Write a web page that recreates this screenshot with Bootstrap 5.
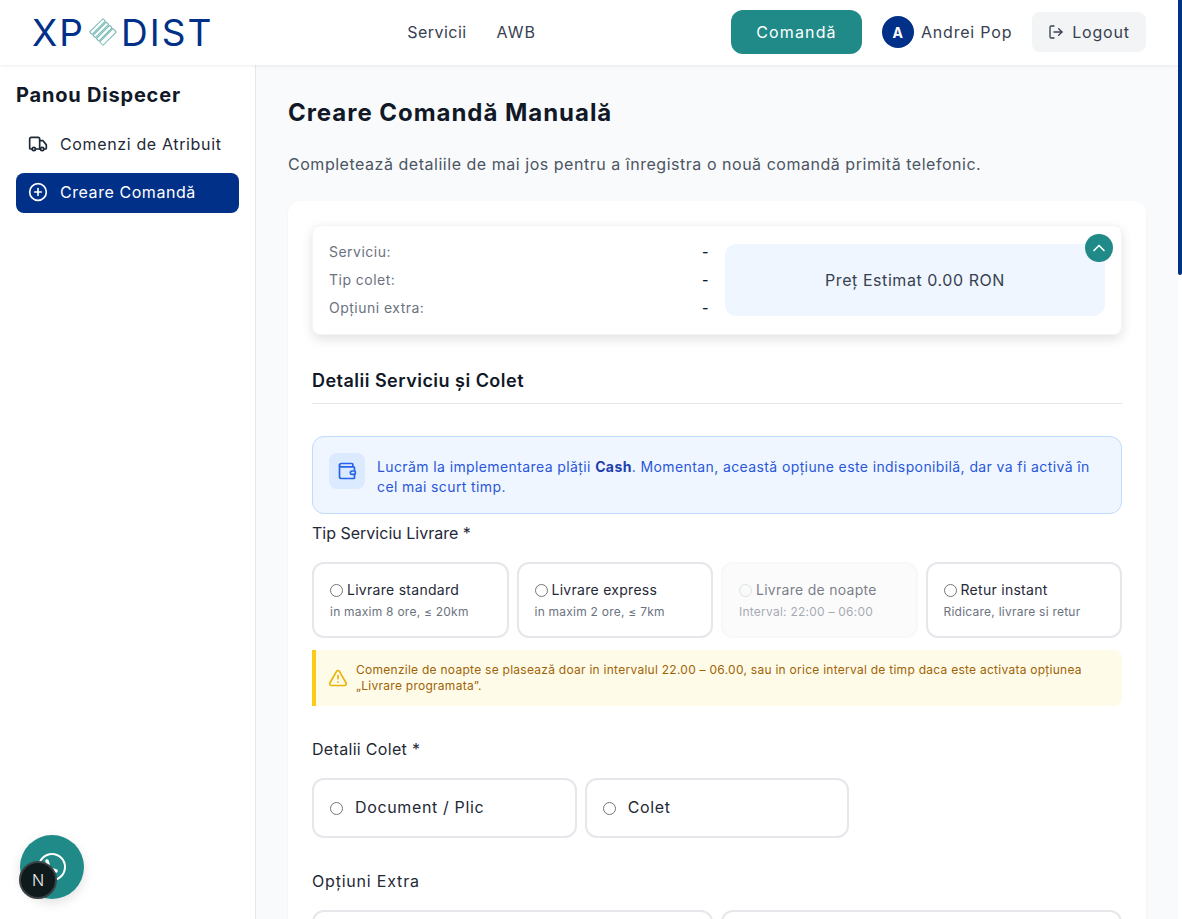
<!DOCTYPE html>
<html lang="ro">
<head>
    <meta charset="UTF-8">
    <meta name="viewport" content="width=device-width, initial-scale=1.0">
    <title>Creare Comandă Manuală</title>
    <link href="https://cdn.jsdelivr.net/npm/bootstrap@5.3.0/dist/css/bootstrap.min.css" rel="stylesheet">
    <style>
        html { background: #fff; }
        body {
            font-family: "Inter", "Liberation Sans", sans-serif;
            letter-spacing: .03em;
            color: #111827;
            background: #f9fafb;
            margin-right: 4px;
        }
        svg.ico { fill: none; stroke: currentColor; stroke-width: 2; stroke-linecap: round; stroke-linejoin: round; flex-shrink: 0; }
        .scroll-thumb { width: 4px; height: 275px; top: 0; right: 0; background: #003087; border-radius: 0 0 4px 4px; z-index: 30; }

        .top-bar { height: 65px; padding: 0 32px 1px; background: #fff; box-shadow: 0 1px 3px rgba(0,0,0,.08); position: sticky; top: 0; z-index: 10; }
        .logo { width: 180px; color: #003087; font-size: 37px; line-height: 1; font-weight: 400; letter-spacing: .055em; }
        .logo svg { width: 28px; height: 28px; margin: 0 4px 0 4px; flex-shrink: 0; }
        .top-nav { gap: 30px; }
        .top-link { color: #374151; font-size: 16px; text-decoration: none; }
        .top-link + .top-link { letter-spacing: .06em; }
        .btn-order { width: 131px; height: 44px; margin-right: 20px; background: #1f8a87; color: #fff; border: 0; border-radius: 12px; font-size: 16px; letter-spacing: .07em; }
        .avatar { width: 32px; height: 32px; background: #003087; color: #fff; font-size: 14px; font-weight: 700; }
        .user-name { width: 91px; margin: 0 20px 0 7px; color: #374151; font-size: 16px; letter-spacing: .05em; white-space: nowrap; }
        .btn-logout { width: 114px; height: 40px; background: #f3f4f6; color: #374151; border: 0; border-radius: 8px; font-size: 16px; letter-spacing: .05em; }

        .side { width: 256px; flex-shrink: 0; background: #fff; border-right: 1px solid #e5e7eb; padding: 16px; }
        .side h2 { font-size: 20px; font-weight: 700; line-height: 28px; margin-bottom: 15px; letter-spacing: .04em; }
        .side-link { height: 40px; padding: 0 12px; gap: 12px; border-radius: 8px; color: #1f2937; text-decoration: none; font-size: 16px; margin-bottom: 9px; letter-spacing: .04em; }
        .side-link.active { background: #003087; color: #fff; padding-bottom: 2px; letter-spacing: .035em; }

        .content { padding: 32px; min-width: 0; }
        .content h1 { font-size: 24px; font-weight: 700; line-height: 32px; margin-bottom: 23px; letter-spacing: .04em; }
        .lead-text { font-size: 16px; line-height: 24px; color: #4b5563; margin-bottom: 25px; letter-spacing: .033em; }
        .form-card { background: #fff; border-radius: 12px; padding: 24px; min-height: 2805px; box-shadow: 0 1px 3px rgba(0,0,0,.05); }

        .summary { height: 110px; padding: 12px 16px; border: 1px solid #f3f4f6; border-radius: 8px; box-shadow: 0 4px 12px rgba(0,0,0,.12); margin-bottom: 32px; }
        .summary-row { height: 28px; padding-bottom: 2px; font-size: 14px; color: #6b7280; }
        .summary-row b { font-weight: 500; color: #111827; }
        .price-box { height: 72px; background: #eff6ff; border-radius: 12px; font-size: 16px; color: #374151; letter-spacing: .035em; }
        .toggle { width: 28px; height: 28px; top: 8px; right: 8px; background: #1f8a87; color: #fff; border: 0; padding: 0; }

        .section-title { font-size: 18px; font-weight: 600; line-height: 28px; padding-bottom: 8px; border-bottom: 1px solid #e5e7eb; margin-bottom: 32px; }
        .info-box { padding: 16px; gap: 12px; background: #eff6ff; border: 1px solid #bfdbfe; border-radius: 12px; color: #2a56d8; font-size: 14px; line-height: 20px; letter-spacing: .028em; }
        .info-box b { color: #1e40af; }
        .info-icon { width: 36px; height: 36px; background: #dbeafe; border-radius: 8px; color: #2563eb; flex-shrink: 0; }
        .field-label { font-size: 16px; line-height: 24px; color: #1f2937; margin-bottom: 17px; }
        .label-service { margin-top: 7px; letter-spacing: 0; }
        .label-pkg { margin-top: 31px; letter-spacing: .02em; }
        .label-extra { margin-top: 31px; letter-spacing: .05em; }

        .opt { border: 2px solid #e5e7eb; border-radius: 12px; background: #fff; cursor: pointer; }
        .opt input { margin: 0; flex-shrink: 0; }
        .opt-service { height: 76px; padding: 0 16px; }
        .opt-service .name { font-size: 14px; line-height: 20px; color: #1f2937; gap: 4px; letter-spacing: .02em; }
        .opt-service small { font-size: 12px; line-height: 16px; color: #6b7280; margin-top: 4px; letter-spacing: .02em; }
        .opt.off { background: #f9fafb; border-color: #f3f4f6; opacity: .6; }
        .opt-plain { height: 60px; padding: 0 16px 2px; gap: 12px; font-size: 16px; color: #1f2937; letter-spacing: .04em; }
        .opt-plain input { margin-top: 2px; }

        .warn { height: 56px; margin-top: 12px; padding: 0 16px 0 12px; gap: 8px; background: #fefce8; border-left: 4px solid #facc15; border-radius: 0 8px 8px 0; color: #a16207; font-size: 12px; line-height: 16px; letter-spacing: .022em; }
        .warn svg { color: #eab308; }

        .chat-btn { width: 64px; height: 64px; left: 20px; bottom: 20px; background: #1f8a87; color: #fff; box-shadow: 0 4px 12px rgba(0,0,0,.12); z-index: 20; }
        .dev-badge { width: 38px; height: 38px; left: 19px; bottom: 20px; background: #0f1a1c; color: #eee; border: 2px solid #3a4245; font-size: 16px; font-weight: 300; letter-spacing: 0; z-index: 21; }
    </style>
</head>
<body>

<header class="top-bar d-flex align-items-center justify-content-between">
    <a class="logo d-flex align-items-center text-decoration-none" href="#">
        <span>XP</span>
        <svg viewBox="0 0 28 28" fill="none" stroke="#6db5b1" stroke-width="1">
            <g transform="rotate(-45 14 14)">
                <rect x="4.6" y="4.6" width="18.8" height="3.4" rx=".4"/>
                <rect x="4.6" y="9.3" width="18.8" height="3.4" rx=".4"/>
                <rect x="4.6" y="14" width="18.8" height="3.4" rx=".4"/>
                <rect x="4.6" y="18.7" width="18.8" height="4.7" rx=".4"/>
            </g>
        </svg>
        <span>DIST</span>
    </a>
    <nav class="top-nav d-flex">
        <a class="top-link" href="#">Servicii</a>
        <a class="top-link" href="#">AWB</a>
    </nav>
    <div class="d-flex align-items-center">
        <button class="btn-order">Comandă</button>
        <span class="avatar rounded-circle d-flex align-items-center justify-content-center">A</span>
        <span class="user-name">Andrei Pop</span>
        <button class="btn-logout d-flex align-items-center justify-content-center gap-2">
            <svg class="ico" width="16" height="16" viewBox="0 0 24 24"><path d="M9 21H5a2 2 0 0 1-2-2V5a2 2 0 0 1 2-2h4"/><polyline points="16 17 21 12 16 7"/><line x1="21" y1="12" x2="9" y2="12"/></svg>
            Logout
        </button>
    </div>
</header>

<div class="d-flex">
    <aside class="side">
        <h2>Panou Dispecer</h2>
        <a class="side-link d-flex align-items-center" href="#">
            <svg class="ico" width="20" height="20" viewBox="0 0 24 24"><path d="M14 18V6a2 2 0 0 0-2-2H4a2 2 0 0 0-2 2v11a1 1 0 0 0 1 1h2"/><path d="M15 18H9"/><path d="M19 18h2a1 1 0 0 0 1-1v-3.65a1 1 0 0 0-.22-.624l-3.48-4.35A1 1 0 0 0 17.52 8H14"/><circle cx="17" cy="18" r="2"/><circle cx="7" cy="18" r="2"/></svg>
            Comenzi de Atribuit
        </a>
        <a class="side-link active d-flex align-items-center" href="#">
            <svg class="ico" width="20" height="20" viewBox="0 0 24 24"><circle cx="12" cy="12" r="10"/><path d="M8 12h8"/><path d="M12 8v8"/></svg>
            Creare Comandă
        </a>
    </aside>

    <main class="content flex-grow-1">
        <h1>Creare Comandă Manuală</h1>
        <p class="lead-text">Completează detaliile de mai jos pentru a înregistra o nouă comandă primită telefonic.</p>

        <div class="form-card">
            <div class="summary position-relative row g-0 align-items-center">
                <div class="col-6 pe-2">
                    <div class="summary-row d-flex align-items-center justify-content-between"><span>Serviciu:</span><b>-</b></div>
                    <div class="summary-row d-flex align-items-center justify-content-between"><span>Tip colet:</span><b>-</b></div>
                    <div class="summary-row d-flex align-items-center justify-content-between"><span>Opțiuni extra:</span><b>-</b></div>
                </div>
                <div class="col-6 ps-2">
                    <div class="price-box d-flex align-items-center justify-content-center">Preț Estimat 0.00 RON</div>
                </div>
                <button class="toggle position-absolute rounded-circle d-flex align-items-center justify-content-center">
                    <svg class="ico" width="20" height="20" viewBox="0 0 24 24" stroke-width="2.5"><path d="m18 15-6-6-6 6"/></svg>
                </button>
            </div>

            <div class="section-title">Detalii Serviciu și Colet</div>

            <div class="info-box d-flex align-items-start">
                <span class="info-icon d-flex align-items-center justify-content-center">
                    <svg class="ico" width="20" height="20" viewBox="0 0 24 24"><path d="M19 7V4a1 1 0 0 0-1-1H5a2 2 0 0 0 0 4h15a1 1 0 0 1 1 1v4h-3a2 2 0 0 0 0 4h3a1 1 0 0 0 1-1v-2a1 1 0 0 0-1-1"/><path d="M3 5v14a2 2 0 0 0 2 2h15a1 1 0 0 0 1-1v-4"/></svg>
                </span>
                <span class="mt-1">Lucrăm la implementarea plății <b>Cash</b>. Momentan, această opțiune este indisponibilă, dar va fi activă în cel mai scurt timp.</span>
            </div>

            <div class="field-label label-service">Tip Serviciu Livrare *</div>
            <div class="row g-2">
                <div class="col-3"><label class="opt opt-service d-flex flex-column justify-content-center">
                    <span class="name d-flex align-items-center"><input type="radio" name="svc"> Livrare standard</span>
                    <small>in maxim 8 ore, ≤ 20km</small>
                </label></div>
                <div class="col-3"><label class="opt opt-service d-flex flex-column justify-content-center">
                    <span class="name d-flex align-items-center"><input type="radio" name="svc"> Livrare express</span>
                    <small>in maxim 2 ore, ≤ 7km</small>
                </label></div>
                <div class="col-3"><label class="opt opt-service off d-flex flex-column justify-content-center">
                    <span class="name d-flex align-items-center"><input type="radio" name="svc" disabled> Livrare de noapte</span>
                    <small>Interval: 22:00 – 06:00</small>
                </label></div>
                <div class="col-3"><label class="opt opt-service d-flex flex-column justify-content-center">
                    <span class="name d-flex align-items-center"><input type="radio" name="svc"> Retur instant</span>
                    <small>Ridicare, livrare si retur</small>
                </label></div>
            </div>

            <div class="warn d-flex align-items-center">
                <svg class="ico" width="20" height="20" viewBox="0 0 24 24"><path d="m21.73 18-8-14a2 2 0 0 0-3.48 0l-8 14A2 2 0 0 0 4 21h16a2 2 0 0 0 1.73-3"/><path d="M12 9v4"/><path d="M12 17h.01"/></svg>
                <span>Comenzile de noapte se plasează doar in intervalul 22.00 – 06.00, sau in orice interval de timp daca este activata opțiunea „Livrare programata”.</span>
            </div>

            <div class="field-label label-pkg">Detalii Colet *</div>
            <div class="row g-2">
                <div class="col-4"><label class="opt opt-plain d-flex align-items-center"><input type="radio" name="pkg"> Document / Plic</label></div>
                <div class="col-4"><label class="opt opt-plain d-flex align-items-center"><input type="radio" name="pkg"> Colet</label></div>
            </div>

            <div class="field-label label-extra">Opțiuni Extra</div>
            <div class="row g-2">
                <div class="col-6"><div class="opt opt-plain"></div></div>
                <div class="col-6"><div class="opt opt-plain"></div></div>
            </div>
        </div>
    </main>
</div>

<button class="chat-btn position-fixed rounded-circle border-0 d-flex align-items-center justify-content-center">
    <svg class="ico" width="32" height="32" viewBox="0 0 32 32" stroke-width="3"><circle cx="16" cy="16" r="13"/><path d="M11 10l1 3M20 20l-3-1" stroke-width="3.5"/></svg>
</button>
<div class="dev-badge position-fixed rounded-circle d-flex align-items-center justify-content-center">N</div>
<div class="scroll-thumb position-fixed"></div>

<script src="https://cdn.jsdelivr.net/npm/bootstrap@5.3.0/dist/js/bootstrap.bundle.min.js"></script>
</body>
</html>
